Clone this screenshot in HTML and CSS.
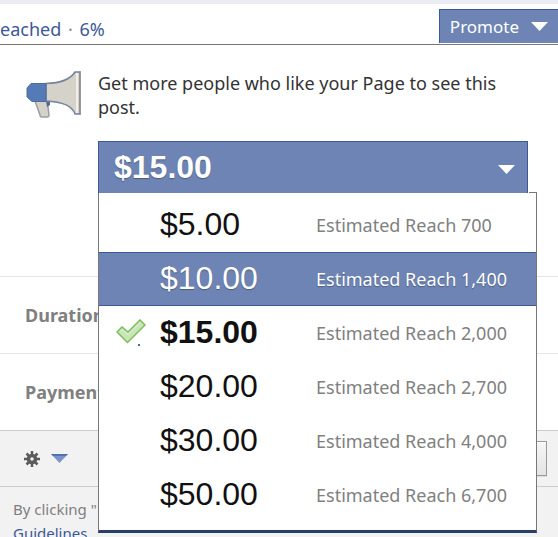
FILE: index.html
```html
<!DOCTYPE html>
<html lang="en">
<head>
    <meta charset="UTF-8">
    <title>Promote</title>
    <link rel="stylesheet" href="styles.css">
</head>
<body>
    <div class="post-bar">
        <a href="#" class="stats">eached <span class="dot">·</span> 6%</a>
        <button type="button" class="promote">
            Promote
            <svg class="arrow" width="17" height="9" viewBox="0 0 17 9"><path d="M0 0h17L8.500 9z" fill="#fff"/></svg>
        </button>
    </div>

    <div class="budget">
        <svg class="megaphone" width="55" height="47" viewBox="0 0 55 47">
            <path d="M9 30l5 14q0 2 2 2h5q2 0 2-2l-1-8V30z" fill="#d5d3c9" stroke="#9a9da5" stroke-width="1.500"/>
            <path d="M20 30h4v4l-3 2z" fill="#54689b"/>
            <path d="M20 12.500Q42 12 49 1h5v42h-5Q45 31 20 30z" fill="#d5d3c9" stroke="#74829d" stroke-width="1.500"/>
            <path d="M51 2v40" stroke="#f1efe6" stroke-width="2"/>
            <path d="M54 0v44" stroke="#938f87" stroke-width="1"/>
            <path d="M20 12.500H5L1 17v9l5 4.500h14z" fill="#547ab8" stroke="#526b9d" stroke-width="1"/>
        </svg>
        <div class="budget-main">
            <p class="intro">Get more people who like your Page to see this post.</p>
            <div class="picker">
                <button type="button" class="picker-button" aria-haspopup="true" aria-expanded="true">
                    $15.00
                    <svg class="arrow" width="17" height="9" viewBox="0 0 17 9"><path d="M0 0h17L8.500 9z" fill="#fff"/></svg>
                </button>
                <ul class="menu">
                    <li><button type="button" class="item"><span class="amount">$5.00</span><span class="reach">Estimated Reach 700</span></button></li>
                    <li><button type="button" class="item active"><span class="amount">$10.00</span><span class="reach">Estimated Reach 1,400</span></button></li>
                    <li>
                        <button type="button" class="item selected">
                            <svg class="check" width="30" height="28" viewBox="0 0 30 28">
                                <path d="M1 13L6 8l6 5L24 1l5 5L11.500 23.500z" fill="#c9e6b8" stroke="#7dbe5b" stroke-width="1.500"/>
                                <path d="M3.500 13L6 10.500l6 5L24 3.500" fill="none" stroke="#e0f2d6" stroke-width="1"/>
                                <path d="M22 25h2v2h-2z" fill="#4a68ae"/>
                            </svg>
                            <span class="amount">$15.00</span><span class="reach">Estimated Reach 2,000</span>
                        </button>
                    </li>
                    <li><button type="button" class="item"><span class="amount">$20.00</span><span class="reach">Estimated Reach 2,700</span></button></li>
                    <li><button type="button" class="item"><span class="amount">$30.00</span><span class="reach">Estimated Reach 4,000</span></button></li>
                    <li><button type="button" class="item"><span class="amount">$50.00</span><span class="reach">Estimated Reach 6,700</span></button></li>
                </ul>
            </div>
        </div>
    </div>

    <div class="row">Duration</div>
    <div class="row">Payment</div>

    <div class="actions">
        <button type="button" class="settings" aria-label="Settings">
            <svg width="16" height="16" viewBox="-8 -8 16 16">
                <path d="M0-8V8M-8 0H8M-5.500-5.500l11 11M5.500-5.500l-11 11" stroke="#5c5c5c" stroke-width="2.500"/>
                <circle r="3.500" fill="#f2f2f2" stroke="#5c5c5c" stroke-width="3.500"/>
            </svg>
            <svg width="17" height="9" viewBox="0 0 17 9"><path d="M0 0h17L8.500 9z" fill="#7c93c8"/><path d="M0 0h17l-2 2H2z" fill="#5370b0"/></svg>
        </button>
        <button type="button" class="submit" aria-label="Submit"></button>
    </div>

    <div class="terms">By clicking "<br><a href="#">Guidelines</a></div>
</body>
</html>
```

FILE: styles.css
```css
* {
    margin: 0;
    padding: 0;
    box-sizing: border-box;
}
html {
    background: #f2f2f2;
}
body {
    overflow: hidden;
    font-family: "Noto Sans", sans-serif;
    font-size: 18px;
    line-height: 24px;
    color: #333;
}
button {
    font: inherit;
    border: 0;
    background: none;
    cursor: pointer;
}
a {
    color: #3b5998;
    text-decoration: none;
}
svg {
    display: block;
}

/* top bar */
.post-bar {
    display: flex;
    justify-content: space-between;
    align-items: flex-start;
    height: 45px;
    padding-top: 5px;
    border-top: 4px solid #ecedf4;
    border-bottom: 1px solid #777;
    background: #fff;
}
.stats {
    padding-top: 8px;
}
.dot {
    padding: 0 2px;
    color: #888;
}
.promote {
    display: flex;
    align-items: center;
    gap: 12px;
    height: 34px;
    padding: 0 10px;
    border: 1px solid #3b5998;
    border-width: 1px 0 0 1px;
    background: #6d84b4;
    color: #fff;
    font-size: 17px;
}

/* budget */
.budget {
    display: flex;
    gap: 17px;
    height: 231px;
    padding: 26px 30px 0 26px;
    background: #fff;
}
.megaphone {
    flex: none;
}
.budget-main {
    flex: 1;
}
.intro {
    margin-bottom: 22px;
    padding-right: 24px;
}
.picker {
    position: relative;
}
.picker-button {
    position: relative;
    z-index: 2;
    display: flex;
    justify-content: space-between;
    align-items: center;
    width: 100%;
    height: 52px;
    padding: 0 12px 2px 15px;
    border: 1px solid #3b5998;
    border-bottom: 0;
    background: #6d84b4;
    box-shadow: 1px 0 #fff;
    color: #fff;
    font: bold 32px/36px "Liberation Sans", sans-serif;
    text-shadow: 0 1px 1px rgba(0, 0, 0, .3);
}
.picker-button .arrow {
    margin-top: 6px;
}
.menu {
    position: absolute;
    z-index: 1;
    top: 51px;
    left: 0;
    right: -9px;
    padding: 5px 0 8px;
    list-style: none;
    border: 1px solid #777;
    border-bottom: 3px solid #293e6a;
    background: #fff;
}
.item {
    display: grid;
    grid-template-columns: 44px 156px 1fr;
    align-items: center;
    width: 100%;
    height: 54px;
    padding-left: 17px;
    border: 1px solid transparent;
    border-width: 1px 0;
    text-align: left;
    color: #808080;
}
.amount {
    grid-column: 2;
    padding-bottom: 2px;
    font: 32px/36px "Liberation Sans", sans-serif;
    color: #111;
}
.check {
    grid-row: 1;
}
.active {
    border-color: #3b5998;
    background: #6d84b4;
    color: #fff;
    text-shadow: 0 1px 1px rgba(0, 0, 0, .3);
}
.active .amount {
    color: #fff;
}
.selected .amount {
    font-weight: bold;
}

.row {
    height: 77px;
    padding: 26px 25px;
    border-top: 1px solid #e5e5e5;
    background: #fff;
    font-weight: bold;
    color: #808080;
}

/* footer */
.actions {
    display: flex;
    justify-content: space-between;
    align-items: center;
    height: 57px;
    padding: 0 11px 0 24px;
    border: 1px solid #ccc;
    border-width: 1px 0;
    background: #f2f2f2;
}
.settings {
    display: flex;
    align-items: center;
    gap: 11px;
}
.submit {
    width: 120px;
    height: 35px;
    border: 1px solid #999;
    background: linear-gradient(#f6f6f6, #e4e4e4);
    box-shadow: inset 0 1px #fff, 0 1px #ddd;
}
.terms {
    padding: 10px 13px 0;
    font-size: 15px;
    color: #808080;
}
```
